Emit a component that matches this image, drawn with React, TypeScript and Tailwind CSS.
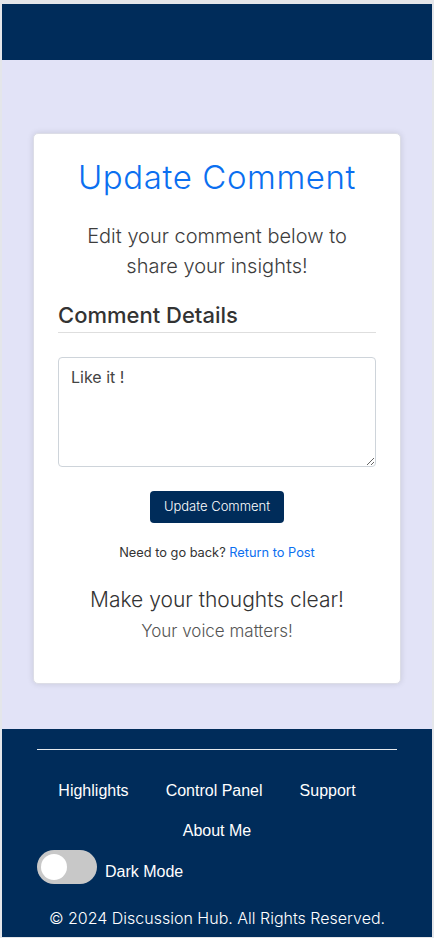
import React from 'react';

const poppins = { fontFamily: 'Inter, "Liberation Sans", sans-serif' };

const App: React.FC = () => {
  return (
    <div className="min-h-[938px] bg-[#e4e6ea] pt-[4px] px-[2px] pb-[2px] flex flex-col font-['Liberation_Sans',Arial,sans-serif]">
      <header className="h-[56px] bg-[#002c5a]" />

      <main className="bg-[#e2e3f7] pt-[73px] pb-[45px] flex justify-center">
        <div className="w-[368px] bg-white border border-[#dcdde6] rounded-[5px] shadow-[0_0_6px_rgba(0,0,0,0.12)] px-[24px] pt-[24px] pb-[40px] flex flex-col items-center">
          <h1 className="font-['Inter',sans-serif] font-light text-[33px] leading-[38px] tracking-[0.6px] text-[#0b6ff0] text-center">
            Update Comment
          </h1>
          <p className="mt-[25px] font-['Inter',sans-serif] font-light text-[20px] leading-[30px] text-[#3d3d3d] text-center">
            Edit your comment below to
            <br />
            share your insights!
          </p>

          <div className="w-full mt-[21px]">
            <h2 className="font-['Inter',sans-serif] font-medium text-[22px] leading-[26px] text-[#333] pb-[4px] border-b border-[#dedede]">
              Comment Details
            </h2>
            <textarea
              defaultValue="Like it !"
              className="block mt-[24px] w-full h-[110px] border border-[#ced4da] rounded-[4px] px-[12px] py-[7px] text-[16px] leading-[24px] text-[#444] font-['Inter',sans-serif] resize-y focus:outline-none"
            />
          </div>

          <button className="mt-[24px] h-[32px] w-[134px] bg-[#002c5a] rounded-[4px] text-white text-[13px] font-['Inter',sans-serif] font-light">
            Update Comment
          </button>

          <p className="mt-[20px] text-[12.8px] leading-[20px] text-[#333] font-['Inter',sans-serif]">
            Need to go back? <a className="text-[#0b6ff0]">Return to Post</a>
          </p>

          <h3 className="mt-[24px] font-['Inter',sans-serif] font-light text-[21px] leading-[25px] text-[#333] text-center">
            Make your thoughts clear!
          </h3>
          <p className="mt-[7px] font-['Inter',sans-serif] font-light text-[17px] leading-[24px] text-[#555] text-center">
            Your voice matters!
          </p>
        </div>
      </main>

      <footer className="bg-[#002c5a] px-[35px] pt-[20px] pb-[7px] text-white">
        <div className="h-px bg-white/90" />
        <nav className="mt-[29px] flex flex-wrap justify-center gap-x-[37px] gap-y-[16px] text-[16px] leading-[24px] font-['Liberation_Sans',Arial,sans-serif]">
          <a>Highlights</a>
          <a>Control Panel</a>
          <a className="mr-[20px]">Support</a>
          <a>About Me</a>
        </nav>
        <div className="mt-[7px] flex items-center gap-[8px]">
          <span className="w-[60px] h-[34px] rounded-full bg-[#c8c8c8] p-[4px] flex items-center">
            <span className="w-[26px] h-[26px] rounded-full bg-white" />
          </span>
          <span className="pt-[9px] text-[16px] font-['Liberation_Sans',Arial,sans-serif]">Dark Mode</span>
        </div>
        <p className="mt-[22px] text-center text-[16px] leading-[24px] font-light" style={poppins}>
          © 2024 Discussion Hub. All Rights Reserved.
        </p>
      </footer>
    </div>
  );
};

export default App;
